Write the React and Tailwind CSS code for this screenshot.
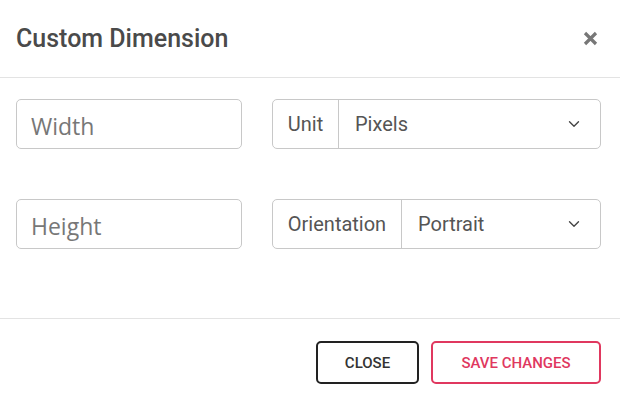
import React from "react";
import { ChevronDown } from "lucide-react";

const Field = ({ placeholder }) => (
  <input
    type="text"
    placeholder={placeholder}
    className="w-[226px] h-[50px] rounded-[5px] border border-[#c8c8c8] px-[14px] pt-[3px] text-[23px] text-[#555] placeholder-[#777] outline-none font-['Open_Sans',sans-serif]"
  />
);

const SelectGroup = ({ label, value, labelWidth }) => (
  <div className="flex w-[329px] h-[50px] rounded-[5px] border border-[#c8c8c8] font-['Roboto',sans-serif] text-[20px] text-[#555]">
    <div className={`flex items-center justify-center border-r border-[#c8c8c8] ${labelWidth}`}>
      {label}
    </div>
    <div className="flex flex-1 items-center justify-between pl-4 pr-[17px]">
      <span>{value}</span>
      <ChevronDown size={18} strokeWidth={1.8} className="text-[#444]" />
    </div>
  </div>
);

export default function App() {
  return (
    <div className="w-[620px] h-[403px] bg-white flex flex-col font-['Roboto',sans-serif]">
      {/* HEADER */}
      <div className="flex items-center justify-between h-[78px] px-4 border-b border-[#e3e3e3]">
        <h1 className="text-[25px] font-medium text-[#4a4a4a]">Custom Dimension</h1>
        <svg width="15" height="15" viewBox="0 0 15 15" className="mr-[6px]">
          <path d="M2 2 L13 13 M13 2 L2 13" stroke="#777" strokeWidth="3.2" strokeLinecap="butt" />
        </svg>
      </div>

      {/* BODY */}
      <div className="flex flex-col gap-[50px] px-4 pt-[21px] h-[241px] border-b border-[#e3e3e3]">
        <div className="flex gap-[30px]">
          <Field placeholder="Width" />
          <SelectGroup label="Unit" value="Pixels" labelWidth="w-[66px]" />
        </div>
        <div className="flex gap-[30px]">
          <Field placeholder="Height" />
          <SelectGroup label="Orientation" value="Portrait" labelWidth="w-[129px]" />
        </div>
      </div>

      {/* FOOTER */}
      <div className="flex justify-end gap-[12px] px-[19px] pt-[22px]">
        <button className="w-[103px] h-[43px] rounded-[5px] border-2 border-[#222] pt-[2px] text-[15px] font-medium text-[#333]">
          CLOSE
        </button>
        <button className="w-[170px] h-[43px] rounded-[5px] border-2 border-[#e0385f] pt-[2px] text-[15px] font-medium text-[#e0385f]">
          SAVE CHANGES
        </button>
      </div>
    </div>
  );
}
